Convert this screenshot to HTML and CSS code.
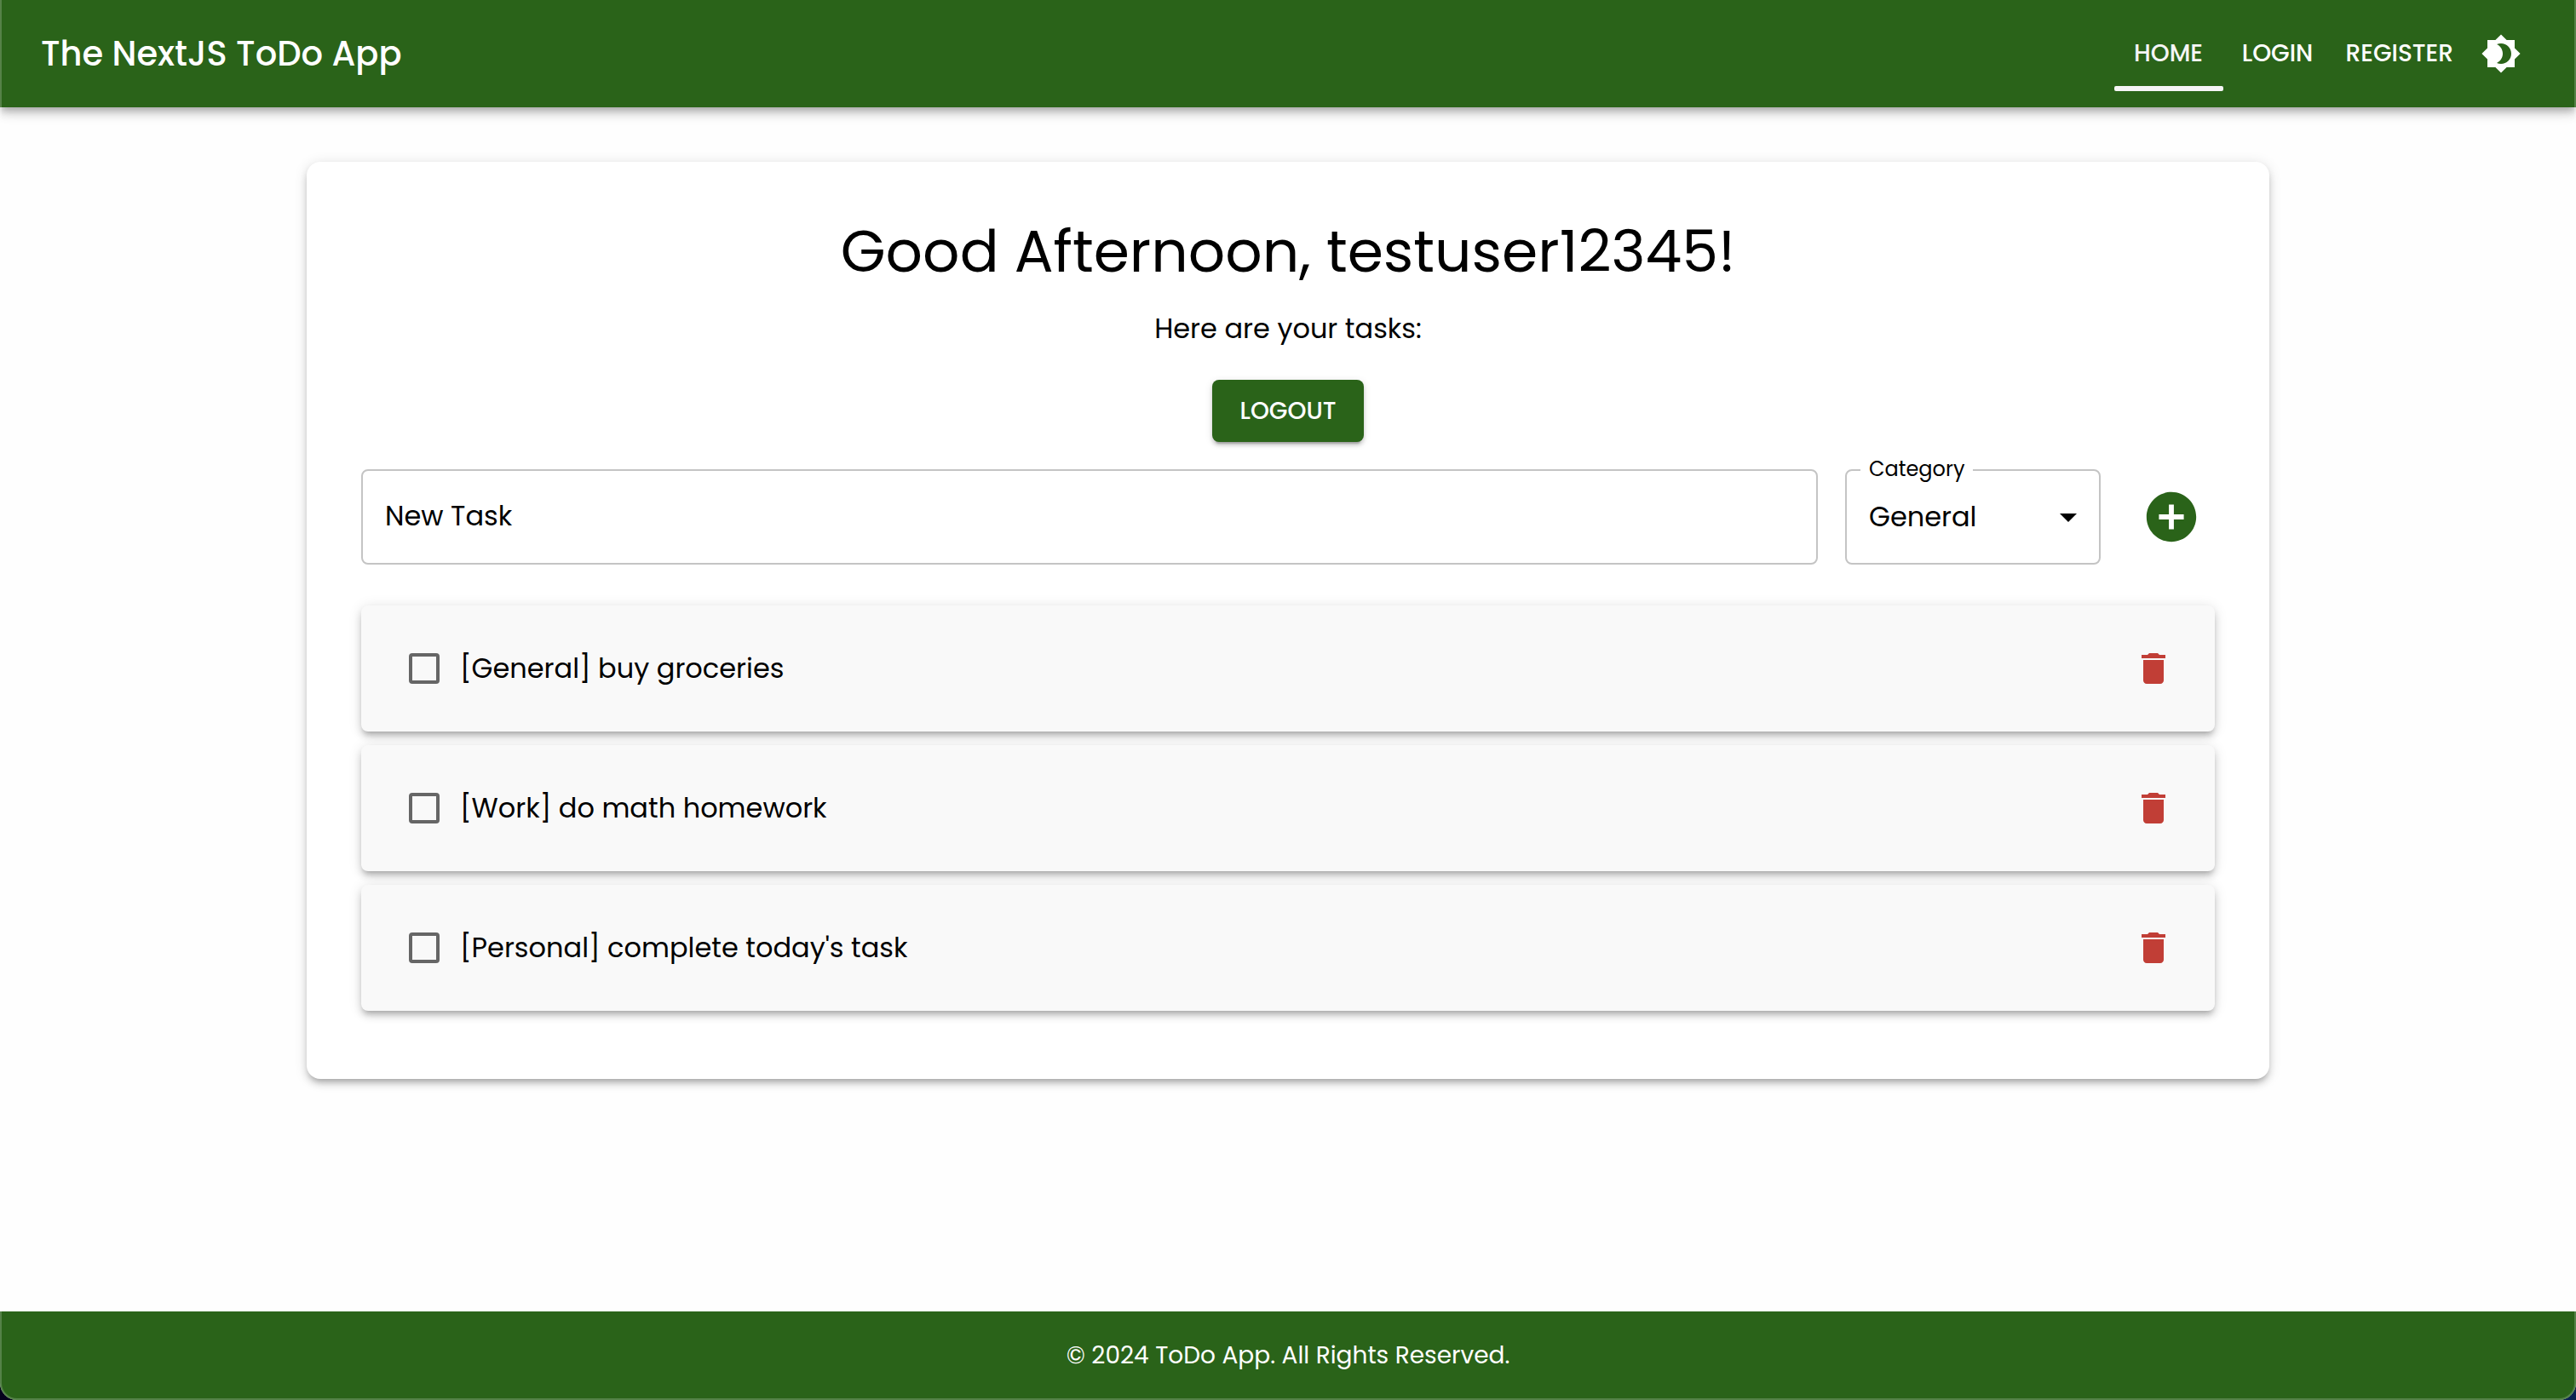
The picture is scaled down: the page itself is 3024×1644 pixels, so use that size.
FILE: index.html
```html
<!DOCTYPE html>
<html lang="en">
<head>
  <meta charset="utf-8">
  <meta name="viewport" content="width=device-width, initial-scale=1">
  <title>The NextJS ToDo App</title>
  <link rel="stylesheet" href="styles.css">
</head>
<body>
  <div class="app">
    <header class="app-bar">
      <div class="app-title">The NextJS ToDo App</div>
      <nav class="app-nav">
        <a class="nav-link nav-link-active" href="#home">HOME</a>
        <a class="nav-link" href="#login">LOGIN</a>
        <a class="nav-link" href="#register">REGISTER</a>
        <button class="icon-button" type="button" aria-label="Toggle dark mode">
          <svg class="icon" viewBox="0 0 24 24" aria-hidden="true"><path d="M20 8.69V4h-4.69L12 .69 8.69 4H4v4.69L.69 12 4 15.31V20h4.69L12 23.31 15.31 20H20v-4.69L23.31 12 20 8.69zM12 18c-.89 0-1.74-.2-2.5-.55C11.56 16.5 13 14.42 13 12s-1.44-4.5-3.5-5.45C10.26 6.2 11.11 6 12 6c3.31 0 6 2.69 6 6s-2.69 6-6 6z"/></svg>
        </button>
      </nav>
    </header>

    <main class="content">
      <section class="panel">
        <h1 class="greeting">Good Afternoon, testuser12345!</h1>
        <p class="subtitle">Here are your tasks:</p>
        <button class="logout" type="button">LOGOUT</button>

        <form class="task-form">
          <div class="new-task">
            <input class="field task-input" id="new-task" type="text" placeholder=" ">
            <label class="task-label" for="new-task">New Task</label>
          </div>
          <div class="category">
            <label class="category-label" for="category">Category</label>
            <select class="field category-select" id="category">
              <option>General</option>
              <option>Work</option>
              <option>Personal</option>
            </select>
            <svg class="icon category-arrow" viewBox="0 0 24 24" aria-hidden="true"><path d="M7 10l5 5 5-5z"/></svg>
          </div>
          <button class="icon-button add-button" type="button" aria-label="Add task">
            <svg class="icon icon-large" viewBox="0 0 24 24" aria-hidden="true"><path d="M12 2C6.48 2 2 6.48 2 12s4.48 10 10 10 10-4.48 10-10S17.52 2 12 2zm5 11h-4v4h-2v-4H7v-2h4V7h2v4h4v2z"/></svg>
          </button>
        </form>

        <ul class="task-list">
          <li class="task">
            <input class="task-check" id="task-1" type="checkbox">
            <label class="task-text" for="task-1">[General] buy groceries</label>
            <button class="icon-button delete-button" type="button" aria-label="Delete task">
              <svg class="icon" viewBox="0 0 24 24" aria-hidden="true"><path d="M6 19c0 1.1.9 2 2 2h8c1.1 0 2-.9 2-2V7H6v12zM19 4h-3.500l-1-1h-5l-1 1H5v2h14V4z"/></svg>
            </button>
          </li>
          <li class="task">
            <input class="task-check" id="task-2" type="checkbox">
            <label class="task-text" for="task-2">[Work] do math homework</label>
            <button class="icon-button delete-button" type="button" aria-label="Delete task">
              <svg class="icon" viewBox="0 0 24 24" aria-hidden="true"><path d="M6 19c0 1.1.9 2 2 2h8c1.1 0 2-.9 2-2V7H6v12zM19 4h-3.500l-1-1h-5l-1 1H5v2h14V4z"/></svg>
            </button>
          </li>
          <li class="task">
            <input class="task-check" id="task-3" type="checkbox">
            <label class="task-text" for="task-3">[Personal] complete today's task</label>
            <button class="icon-button delete-button" type="button" aria-label="Delete task">
              <svg class="icon" viewBox="0 0 24 24" aria-hidden="true"><path d="M6 19c0 1.1.9 2 2 2h8c1.1 0 2-.9 2-2V7H6v12zM19 4h-3.500l-1-1h-5l-1 1H5v2h14V4z"/></svg>
            </button>
          </li>
        </ul>
      </section>
    </main>

    <footer class="footer">© 2024 ToDo App. All Rights Reserved.</footer>
  </div>
</body>
</html>
```
FILE: styles.css
```css
:root {
  --green: #2a6319;
  --red: #c13e36;
  --shadow: 0 4px 8px -2px rgba(0, 0, 0, 0.2), 0 8px 10px rgba(0, 0, 0, 0.14), 0 2px 20px rgba(0, 0, 0, 0.12);
  --shadow-paper: 0 6px 6px -4px rgba(0, 0, 0, 0.2), 0 6px 8px rgba(0, 0, 0, 0.14), 0 2px 16px rgba(0, 0, 0, 0.12);
}

*,
*::before,
*::after {
  box-sizing: border-box;
}

html {
  background: linear-gradient(90deg, #05021c, #0c2350);
}

body {
  margin: 0;
  color: #000;
  font-family: "Poppins", "Inter", sans-serif;
  font-size: 32px;
  line-height: 48px;
}

button,
input,
select {
  font: inherit;
  color: inherit;
}

.app {
  position: relative;
  display: flex;
  flex-direction: column;
  min-height: 100vh;
  overflow: hidden;
  border-radius: 0 0 20px 20px;
  background: #fefefe;
}

/* Hairline along the window edge */
.app::after {
  content: "";
  position: absolute;
  inset: 0;
  border: 2px solid rgba(255, 255, 255, 0.2);
  border-top: 0;
  border-radius: inherit;
  pointer-events: none;
}

.app-bar {
  display: flex;
  align-items: center;
  justify-content: space-between;
  height: 126px;
  padding: 0 48px;
  background: var(--green);
  color: #fff;
  box-shadow: var(--shadow);
}

.app-title {
  font-size: 40px;
  font-weight: 500;
}

.app-nav {
  display: flex;
  align-items: center;
}

.nav-link {
  position: relative;
  display: flex;
  align-items: center;
  justify-content: center;
  min-width: 128px;
  height: 88px;
  padding: 0 16px;
  color: #fff;
  font-size: 28px;
  font-weight: 500;
  text-decoration: none;
}

.nav-link-active {
  color: #f5f5f5;
}

.nav-link-active::after {
  content: "";
  position: absolute;
  right: 0;
  bottom: 0;
  left: 0;
  height: 6px;
  border-radius: 2px;
  background: #f5f5f5;
}

.icon-button {
  display: flex;
  flex: none;
  padding: 16px;
  border: 0;
  background: none;
}

.icon {
  width: 48px;
  height: 48px;
  fill: currentColor;
}

.icon-large {
  width: 70px;
  height: 70px;
}

.content {
  flex: 1;
  padding: 64px 48px;
}

.panel {
  display: flex;
  flex-direction: column;
  align-items: center;
  max-width: 2304px;
  margin: 0 auto;
  padding: 64px 64px 80px;
  border-radius: 16px;
  background: #fff;
  box-shadow: var(--shadow-paper);
}

.greeting {
  margin: 0 0 24px;
  font-size: 68px;
  font-weight: 400;
  line-height: 84px;
}

.subtitle {
  margin: 0 0 36px;
}

.logout {
  min-width: 178px;
  height: 73px;
  margin-bottom: 32px;
  padding: 0 32px;
  border: 0;
  border-radius: 8px;
  background: var(--green);
  color: #fff;
  font-size: 28px;
  font-weight: 500;
  box-shadow: 0 6px 2px -4px rgba(0, 0, 0, 0.2), 0 4px 4px rgba(0, 0, 0, 0.14), 0 2px 10px rgba(0, 0, 0, 0.12);
}

.task-form {
  display: flex;
  align-items: center;
  align-self: stretch;
  gap: 32px;
  margin-bottom: 48px;
}

.field {
  display: block;
  width: 100%;
  height: 112px;
  border: 2px solid #c4c4c4;
  border-radius: 8px;
  background: #fff;
}

.new-task {
  position: relative;
  flex: 1;
}

.task-input {
  padding: 0 26px;
}

/* The label rests inside the field until something is typed */
.task-label {
  position: absolute;
  top: 31px;
  left: 28px;
  pointer-events: none;
}

.task-input:focus + .task-label,
.task-input:not(:placeholder-shown) + .task-label {
  top: -16px;
  left: 18px;
  padding: 0 10px;
  background: #fff;
  font-size: 24px;
  line-height: 32px;
}

.category {
  position: relative;
  flex: none;
  width: 300px;
}

.category-label {
  position: absolute;
  top: -16px;
  left: 18px;
  padding: 0 10px;
  background: #fff;
  font-size: 24px;
  line-height: 32px;
}

.category-select {
  padding: 0 64px 0 26px;
  appearance: none;
}

.category-arrow {
  position: absolute;
  top: 32px;
  right: 14px;
  pointer-events: none;
}

.add-button {
  color: var(--green);
}

.task-list {
  display: flex;
  flex-direction: column;
  align-self: stretch;
  gap: 16px;
  margin: 0;
  padding: 0;
  list-style: none;
}

.task {
  display: flex;
  align-items: center;
  gap: 24px;
  height: 148px;
  padding: 0 32px 0 56px;
  border-radius: 8px;
  background: #f9f9f9;
  box-shadow: var(--shadow-paper);
}

.task-check {
  flex: none;
  width: 36px;
  height: 36px;
  margin: 0;
  border: 4px solid #666;
  border-radius: 4px;
  appearance: none;
}

.task-check:checked {
  background: #666;
}

.task-text {
  flex: 1;
}

.delete-button {
  color: var(--red);
}

.footer {
  padding: 28px 32px;
  background: var(--green);
  color: #fff;
  font-size: 28px;
  text-align: center;
}
```
